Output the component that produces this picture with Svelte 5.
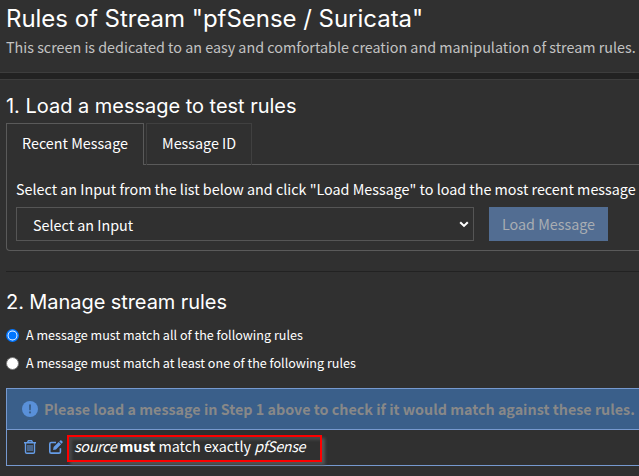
<script>
  let mode = $state('all');
  const modes = [
    { id: 'all', label: 'A message must match all of the following rules' },
    { id: 'any', label: 'A message must match at least one of the following rules' }
  ];
</script>

<div class="page">
  <header>
    <h1>Rules of Stream "pfSense / Suricata"</h1>
    <p>This screen is dedicated to an easy and comfortable creation and manipulation of stream rules.</p>
  </header>

  <main>
    <h2 class="load">1. Load a message to test rules</h2>
    <nav>
      <span class="tab active">Recent Message</span>
      <span class="tab">Message ID</span>
    </nav>
    <section class="panel">
      <p>Select an Input from the list below and click "Load Message" to load the most recent message</p>
      <div class="form">
        <div class="select">
          <span>Select an Input</span>
          <svg width="10" height="7" viewBox="0 0 10 7"><path d="M1.2 1.2 5 4.9 8.8 1.2" fill="none" stroke="#fff" stroke-width="2.1" /></svg>
        </div>
        <button disabled>Load Message</button>
      </div>
    </section>

    <hr />

    <h2>2. Manage stream rules</h2>
    <div class="modes">
      {#each modes as m}
        <label>
          <input type="radio" name="mode" value={m.id} bind:group={mode} />
          <svg class="dot" width="13" height="13" viewBox="0 0 13 13">
            {#if mode === m.id}
              <circle cx="6.5" cy="6.5" r="5.7" fill="#fff" stroke="#0075ff" stroke-width="1.6" />
              <circle cx="6.5" cy="6.5" r="4" fill="#0075ff" />
            {:else}
              <circle cx="6.5" cy="6.5" r="6" fill="#fff" stroke="#767676" />
            {/if}
          </svg>
          {m.label}
        </label>
      {/each}
    </div>

    <div class="rules">
      <div class="alert">
        <svg width="16" height="16" viewBox="0 0 16 16"><circle cx="8" cy="8" r="8" fill="#5990d9" /><path d="M7 3.6h2L8.8 9.2H7.2z" fill="#3a5f8a" /><circle cx="8" cy="11.4" r="1.1" fill="#3a5f8a" /></svg>
        <strong>Please load a message in Step 1 above to check if it would match against these rules.</strong>
      </div>
      <div class="rule">
        <svg class="trash" width="12" height="14" viewBox="0 0 12 14" fill="none" stroke="#659ce6"><path d="M0 2.7h12M3.5 2.4 4.4.7h3.2l.9 1.7M1.5 2.8v9.2q0 1.3 1.3 1.3h6.4q1.3 0 1.3-1.3V2.8" stroke-width="1.4" /><path d="M4 5v6M6 5v6M8 5v6" stroke-width="1" /></svg>
        <svg class="edit" width="14" height="14" viewBox="0 0 14 14"><path d="M7 2.5H2.2Q.8 2.5.8 3.9v7.8q0 1.4 1.4 1.4H10q1.4 0 1.4-1.4V8.2" fill="none" stroke="#659ce6" stroke-width="1.6" /><path d="M4.1 9.9 4.6 7 9.7 1.9l2.4 2.4L7 9.4zM10.3 1.4l.9-.9q.6-.5 1.2 0l1.1 1.1q.5.6 0 1.2l-.9.9z" fill="#659ce6" /></svg>
        <div class="mark"><i>source</i> <b>must</b> match exactly <i>pfSense</i></div>
      </div>
    </div>
  </main>
</div>

<style>
  :global(body) { margin: 0; background: #303030; overflow: hidden; }
  .page {
    box-sizing: border-box;
    width: 639px;
    height: 476px;
    overflow: hidden;
    background: #303030;
    color: #fff;
    font: 14.33px/20px "Noto Sans CJK SC", "Noto Sans", sans-serif;
    white-space: nowrap;
  }
  h1, h2, p { margin: 0; font-weight: 400; }
  h1, h2 { font-family: Inter, sans-serif; }
  h1 { font-size: 24px; line-height: 28px; letter-spacing: -.03px; padding-top: 1px; }
  h2 { font-size: 20px; line-height: 24px; letter-spacing: -.07px; }
  .load { letter-spacing: -.02px; }
  header {
    box-sizing: border-box;
    height: 73px;
    padding: 4px 0 0 6px;
    border-bottom: 1px solid #3d3d3d;
    box-shadow: 0 6px 0 #222;
  }
  header p { margin-top: 4px; color: #c3c3c3; }
  main { border-top: 1px solid #3d3d3d; padding: 14px 0 0 6px; margin-top: 6px; }
  nav { display: flex; gap: 2px; margin-top: 5px; border-bottom: 1px solid #5a5a5a; height: 41px; }
  .tab { box-sizing: border-box; height: 42px; padding: 9px 15px 0; border: 1px solid #404040; border-bottom: 0; width: 106px; }
  .tab.active { width: 138px; border-color: #5a5a5a; background: #303030; }
  .panel {
    box-sizing: border-box;
    height: 86px;
    padding: 14px 0 0 9px;
    border: 1px solid #5a5a5a;
    border-width: 0 0 1px 1px;
    border-bottom-left-radius: 4px;
  }
  .form { display: flex; gap: 15px; margin-top: 8px; }
  .select {
    box-sizing: border-box;
    display: flex;
    align-items: center;
    justify-content: space-between;
    width: 458px;
    height: 34px;
    padding: 2px 4px 0 16px;
    border: 1px solid #555;
  }
  .select svg { margin-bottom: 1px; }
  button {
    width: 119px;
    height: 34px;
    padding: 0 0 1px;
    border: 0;
    background: #526d92;
    color: #a9adb2;
    font: inherit;
  }
  hr { margin: 20px 0 18px; border: 0; border-top: 1px solid #222; }
  .modes { margin-top: 11px; font-size: 12.57px; }
  label { display: flex; align-items: center; height: 20px; }
  label + label { margin-top: 8px; }
  input { position: absolute; opacity: 0; }
  .dot { margin-right: 7px; }
  .rules { margin-top: 15px; border: 1px solid #7699cf; border-right: 0; }
  .alert {
    display: flex;
    align-items: center;
    gap: 6px;
    height: 40px;
    padding-left: 15px;
    background: #3a5f8a;
    border-bottom: 1px solid #7699cf;
    color: #888;
  }
  .rule { display: flex; align-items: center; height: 35px; padding-left: 17px; }
  .trash { margin-bottom: 2px; }
  .edit { margin: 0 0 2px 13px; }
  .mark {
    box-sizing: border-box;
    width: 255px;
    height: 27px;
    margin: 2px 0 0 4px;
    padding-left: 5px;
    border: 2px solid #f00;
    line-height: 18px;
    box-shadow: 3px 3px 3px #555, inset 3px 3px 3px #484848;
  }
  i { letter-spacing: -.35px; }
</style>
